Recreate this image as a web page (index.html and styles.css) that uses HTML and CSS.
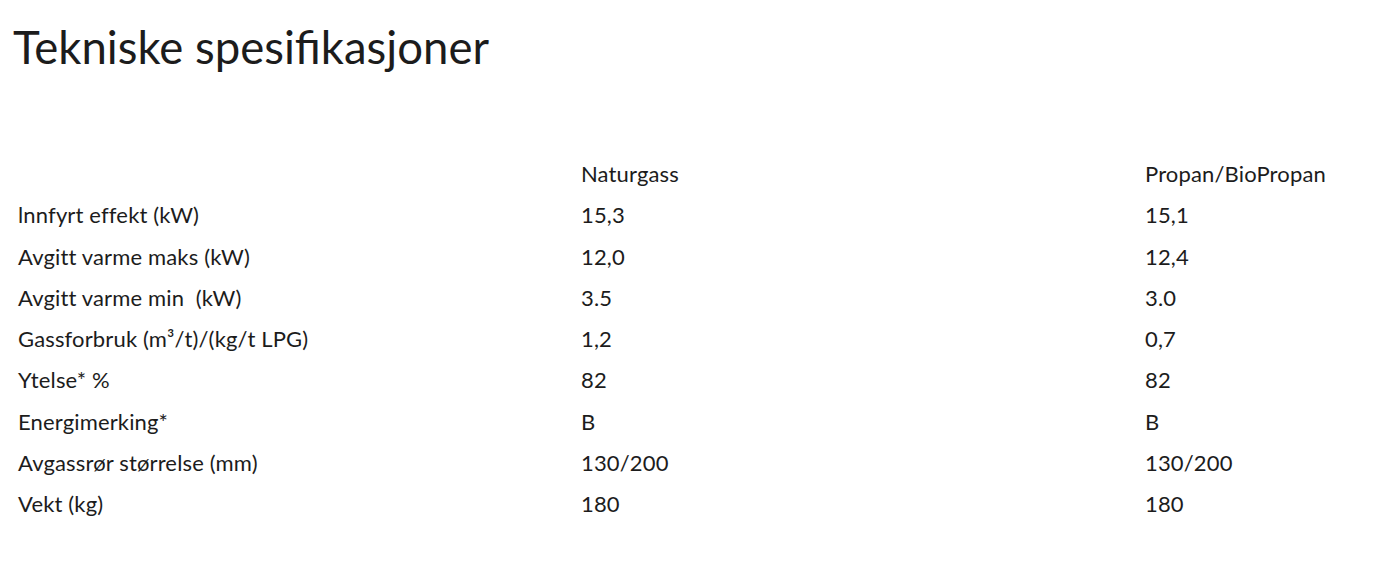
FILE: index.html
```html
<!DOCTYPE html>
<html lang="no">
<head>
<meta charset="utf-8">
<title>Tekniske spesifikasjoner</title>
<link rel="stylesheet" href="styles.css">
</head>
<body>
<section class="specs">
  <h2 class="specs-title">Tekniske spesifikasjoner</h2>
  <div class="specs-table">
    <div class="row head"><span></span><span>Naturgass</span><span>Propan/BioPropan</span></div>
    <div class="row"><span>lnnfyrt effekt (kW)</span><span>15,3</span><span>15,1</span></div>
    <div class="row"><span>Avgitt varme maks (kW)</span><span>12,0</span><span>12,4</span></div>
    <div class="row"><span>Avgitt varme min&nbsp; (kW)</span><span>3.5</span><span>3.0</span></div>
    <div class="row"><span>Gassforbruk (m³/t)/(kg/t LPG)</span><span>1,2</span><span>0,7</span></div>
    <div class="row"><span>Ytelse* %</span><span>82</span><span>82</span></div>
    <div class="row"><span>Energimerking*</span><span>B</span><span>B</span></div>
    <div class="row"><span>Avgassrør størrelse (mm)</span><span>130/200</span><span>130/200</span></div>
    <div class="row"><span>Vekt (kg)</span><span>180</span><span>180</span></div>
  </div>
</section>
</body>
</html>
```

FILE: styles.css
```css
html, body {
  margin: 0;
  padding: 0;
  background: #ffffff;
}
body {
  font-family: "Lato", "Open Sans", sans-serif;
  color: #1c1c1c;
}
.specs {
  padding: 0 0 0 13px;
}
.specs-title {
  margin: 0;
  padding-top: 17px;
  font-size: 45.5px;
  font-weight: 400;
  line-height: 60px;
  letter-spacing: 0;
}
.specs-table {
  margin-top: 76px;
  padding-left: 5px;
}
.row {
  display: grid;
  grid-template-columns: 563px 564px auto;
  height: 41.3px;
  font-size: 22px;
  line-height: 41.3px;
  letter-spacing: 0.15px;
}
```
